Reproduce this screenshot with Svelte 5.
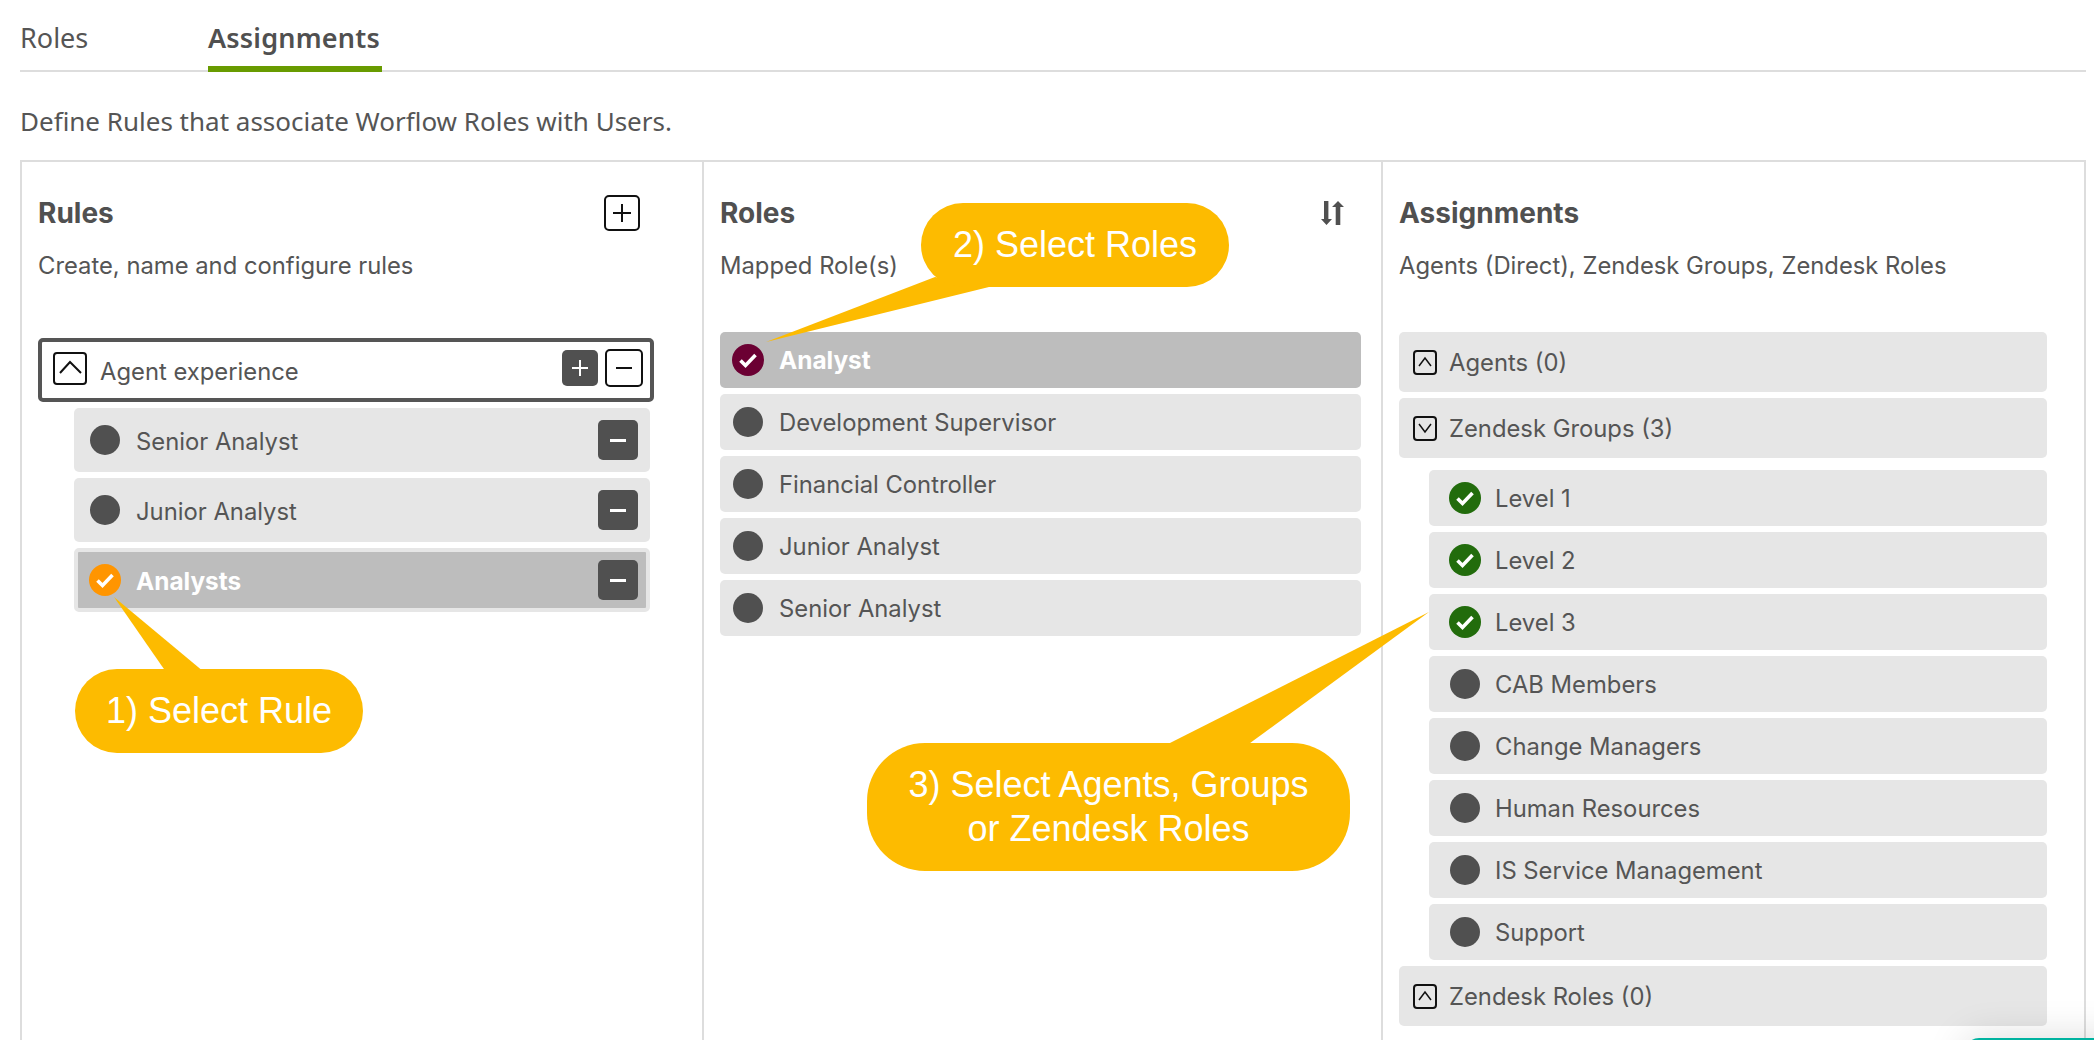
<script lang="ts">
  const rules = [
    { name: 'Senior Analyst', selected: false },
    { name: 'Junior Analyst', selected: false },
    { name: 'Analysts', selected: true }
  ];

  const roles = [
    { name: 'Analyst', selected: true },
    { name: 'Development Supervisor', selected: false },
    { name: 'Financial Controller', selected: false },
    { name: 'Junior Analyst', selected: false },
    { name: 'Senior Analyst', selected: false }
  ];

  const groups = [
    { name: 'Level 1', checked: true },
    { name: 'Level 2', checked: true },
    { name: 'Level 3', checked: true },
    { name: 'CAB Members', checked: false },
    { name: 'Change Managers', checked: false },
    { name: 'Human Resources', checked: false },
    { name: 'IS Service Management', checked: false },
    { name: 'Support', checked: false }
  ];
</script>

{#snippet check(color)}
  <svg class="check" width="32" height="32" viewBox="0 0 32 32">
    <circle cx="16" cy="16" r="16" fill={color} />
    <path d="M8.5 16.500l5 5L23.500 11" fill="none" stroke="#fff" stroke-width="3.600" />
  </svg>
{/snippet}

<div class="page">
  <nav class="tabs">
    <div class="tab">Roles</div>
    <div class="tab active">Assignments</div>
  </nav>

  <p class="intro">Define Rules that associate Worflow Roles with Users.</p>

  <div class="table">
    <section class="col rules">
      <header>
        <h2>Rules</h2>
        <button class="outline add" aria-label="Add rule">
          <svg width="18" height="18" viewBox="0 0 18 18"><path d="M9 0v18M0 9h18" stroke="#111" stroke-width="2" /></svg>
        </button>
      </header>
      <p class="sub">Create, name and configure rules</p>

      <div class="list">
        <div class="rule-head">
          <span class="caret big">
            <svg width="30" height="29" viewBox="0 0 30 29"><path d="M5 19L15 8l11 11" fill="none" stroke="#111" stroke-width="2" /></svg>
          </span>
          <span class="rule-name">Agent experience</span>
          <button class="solid head-add" aria-label="Add role">
            <svg width="16" height="16" viewBox="0 0 16 16"><path d="M8 0v16M0 8h16" stroke="#fff" stroke-width="2" /></svg>
          </button>
          <button class="outline head-remove" aria-label="Remove rule">
            <svg width="16" height="2" viewBox="0 0 16 2"><path d="M0 1h16" stroke="#111" stroke-width="2" /></svg>
          </button>
        </div>

        {#each rules as r}
          <div class="rule-row" class:selected={r.selected}>
            {#if r.selected}
              {@render check('#ff9500')}
            {:else}
              <span class="dot"></span>
            {/if}
            <span class="label">{r.name}</span>
            <button class="solid remove" aria-label="Remove">
              <svg width="16" height="3" viewBox="0 0 16 3"><path d="M0 1.500h16" stroke="#fff" stroke-width="3" /></svg>
            </button>
          </div>
        {/each}
      </div>
    </section>

    <section class="col roles">
      <header>
        <h2>Roles</h2>
        <svg class="sort" width="24" height="24" viewBox="0 0 24 24">
          <path d="M3 0h4.400v18H11l-5.500 6L0 18h3zM14.700 24h4.600V6H23L17 0l-6 6h3.700z" fill="#505050" />
        </svg>
      </header>
      <p class="sub">Mapped Role(s)</p>

      <div class="list">
        {#each roles as r}
          <div class="row" class:selected={r.selected}>
            {#if r.selected}
              {@render check('#6b0033')}
            {:else}
              <span class="dot"></span>
            {/if}
            <span class="label">{r.name}</span>
          </div>
        {/each}
      </div>
    </section>

    <section class="col assignments">
      <header>
        <h2>Assignments</h2>
      </header>
      <p class="sub">Agents (Direct), Zendesk Groups, Zendesk Roles</p>

      <div class="list">
        <div class="group">
          <span class="caret">
            <svg width="20" height="21" viewBox="0 0 20 21"><path d="M4 14l6-8 6 8" fill="none" stroke="#111" stroke-width="1.500" /></svg>
          </span>
          <span>Agents (0)</span>
        </div>
        <div class="group">
          <span class="caret">
            <svg width="20" height="21" viewBox="0 0 20 21"><path d="M4 6l6 8 6-8" fill="none" stroke="#111" stroke-width="1.500" /></svg>
          </span>
          <span>Zendesk Groups (3)</span>
        </div>

        <div class="children">
          {#each groups as g}
            <div class="row">
              {#if g.checked}
                {@render check('#226c0c')}
              {:else}
                <span class="dot"></span>
              {/if}
              <span class="label">{g.name}</span>
            </div>
          {/each}
        </div>

        <div class="group">
          <span class="caret">
            <svg width="20" height="21" viewBox="0 0 20 21"><path d="M4 14l6-8 6 8" fill="none" stroke="#111" stroke-width="1.500" /></svg>
          </span>
          <span>Zendesk Roles (0)</span>
        </div>
      </div>
    </section>
  </div>

  <!-- callouts sit on top of the table -->
  <svg class="tails" width="2094" height="1040" viewBox="0 0 2094 1040">
    <polygon points="114,597 166,672 204,672" />
    <polygon points="766,342 935,277 989,287" />
    <polygon points="1429,612 1164,746 1246,746" />
  </svg>
  <div class="callout one">1) Select Rule</div>
  <div class="callout two">2) Select Roles</div>
  <div class="callout three">3) Select Agents, Groups<br />or Zendesk Roles</div>

  <div class="widget"></div>
</div>

<style>
  :global(body) {
    margin: 0;
    background: #fff;
  }

  .page {
    position: relative;
    display: flex;
    flex-direction: column;
    height: 1040px;
    overflow: hidden;
    padding: 0 8px 0 20px;
    box-sizing: border-box;
    font-family: Inter, 'Noto Sans', sans-serif;
    font-size: 23.800px;
    color: #555;
  }

  .tabs {
    display: flex;
    flex: none;
    height: 72px;
    border-bottom: 2px solid #ddd;
    box-sizing: border-box;
    font-family: 'Noto Sans', sans-serif;
    font-size: 27px;
  }

  .tab {
    width: 188px;
    padding: 19px 0 0 0;
    box-sizing: border-box;
    line-height: 37px;
  }

  .tab.active {
    width: 174px;
    height: 72px;
    border-bottom: 6px solid #689b00;
    font-weight: 600;
    letter-spacing: 0.2px;
    color: #505050;
  }

  .intro {
    flex: none;
    margin: 32px 0 21px 0;
    height: 35px;
    line-height: 35px;
    font-family: 'Noto Sans', sans-serif;
    font-size: 26px;
  }

  .table {
    flex: 1;
    display: grid;
    grid-template-columns: 682px 679px 1fr;
    border: 2px solid #ddd;
    border-bottom: none;
  }

  .col {
    padding: 33px 20px 0 16px;
    border-right: 2px solid #ddd;
    min-width: 0;
  }

  .col:last-child {
    border-right: none;
    padding: 33px 37px 0 16px;
  }

  .col.rules {
    padding-right: 48px;
  }

  header {
    display: flex;
    align-items: center;
    justify-content: space-between;
    height: 36px;
  }

  h2 {
    margin: 0;
    font-size: 28px;
    font-weight: 700;
    color: #505050;
  }

  .sub {
    margin: 20px 0 0;
    height: 30px;
    line-height: 30px;
  }

  .list {
    display: flex;
    flex-direction: column;
    gap: 6px;
    margin-top: 51px;
  }

  .rules .list {
    margin-top: 57px;
  }

  button {
    display: flex;
    align-items: center;
    justify-content: center;
    padding: 0;
    box-sizing: border-box;
    border-radius: 5px;
  }

  .outline {
    background: #fff;
    border: 2px solid #111;
  }

  .solid {
    background: #505050;
    border: none;
  }

  .add {
    width: 36px;
    height: 36px;
    margin-right: 14px;
  }

  .sort {
    margin-right: 16px;
  }

  .rule-head {
    display: flex;
    align-items: center;
    height: 64px;
    padding: 0 7px 4px 11px;
    border: 4px solid #555;
    border-radius: 5px;
    box-sizing: border-box;
  }

  .rule-name {
    flex: 1;
    margin: 6px 0 0 13px;
  }

  .head-add {
    width: 36px;
    height: 36px;
  }

  .head-remove {
    width: 38px;
    height: 38px;
    margin-left: 7px;
  }

  .caret {
    display: flex;
    align-items: center;
    justify-content: center;
    flex: none;
    box-sizing: border-box;
    width: 24px;
    height: 25px;
    border: 2px solid #111;
    border-radius: 4px;
  }

  .caret.big {
    width: 34px;
    height: 33px;
  }

  .dot {
    flex: none;
    width: 30px;
    height: 30px;
    border-radius: 50%;
    background: #505050;
  }

  .check {
    flex: none;
    margin: 0 -1px;
  }

  .rule-row {
    display: flex;
    align-items: center;
    gap: 16px;
    height: 64px;
    margin: 0 4px 0 36px;
    padding: 0 12px 0 16px;
    border-radius: 5px;
    box-sizing: border-box;
    background: #e6e6e6;
  }

  .rule-row.selected {
    padding: 0 8px 0 12px;
    border: 4px solid #e6e6e6;
    background: #bdbdbd;
  }

  .rule-row .label {
    padding-top: 2px;
  }

  .label {
    flex: 1;
  }

  .selected .label {
    font-size: 24.400px;
    font-weight: 700;
    color: #fff;
  }

  .remove {
    width: 40px;
    height: 40px;
  }

  .row {
    display: flex;
    align-items: center;
    gap: 16px;
    height: 56px;
    padding-left: 13px;
    border-radius: 5px;
    background: #e6e6e6;
  }

  .row.selected {
    background: #bdbdbd;
  }

  .group {
    display: flex;
    align-items: center;
    gap: 12px;
    height: 60px;
    padding-left: 14px;
    border-radius: 5px;
    background: #e6e6e6;
  }

  .children {
    display: flex;
    flex-direction: column;
    gap: 6px;
    margin: 6px 0 0 30px;
  }

  .children .row {
    padding-left: 21px;
    gap: 15px;
  }

  .tails {
    position: absolute;
    top: 0;
    left: 0;
    pointer-events: none;
  }

  .tails polygon {
    fill: #fdbb00;
  }

  .callout {
    position: absolute;
    display: flex;
    align-items: center;
    justify-content: center;
    text-align: center;
    box-sizing: border-box;
    background: #fdbb00;
    color: #fff;
    font-family: 'Liberation Sans', Arial, sans-serif;
    font-size: 36px;
    line-height: 44px;
  }

  .one {
    left: 75px;
    top: 669px;
    width: 288px;
    height: 84px;
    border-radius: 42px;
  }

  .two {
    left: 921px;
    top: 203px;
    width: 308px;
    height: 84px;
    border-radius: 42px;
  }

  .three {
    left: 867px;
    top: 743px;
    width: 483px;
    height: 128px;
    border-radius: 58px;
  }

  .widget {
    position: absolute;
    left: 1965px;
    top: 1038px;
    width: 200px;
    height: 60px;
    border-radius: 14px 14px 0 0;
    background: #00b3a0;
    box-shadow: 0 0 40px rgba(0, 0, 0, 0.14);
  }
</style>
